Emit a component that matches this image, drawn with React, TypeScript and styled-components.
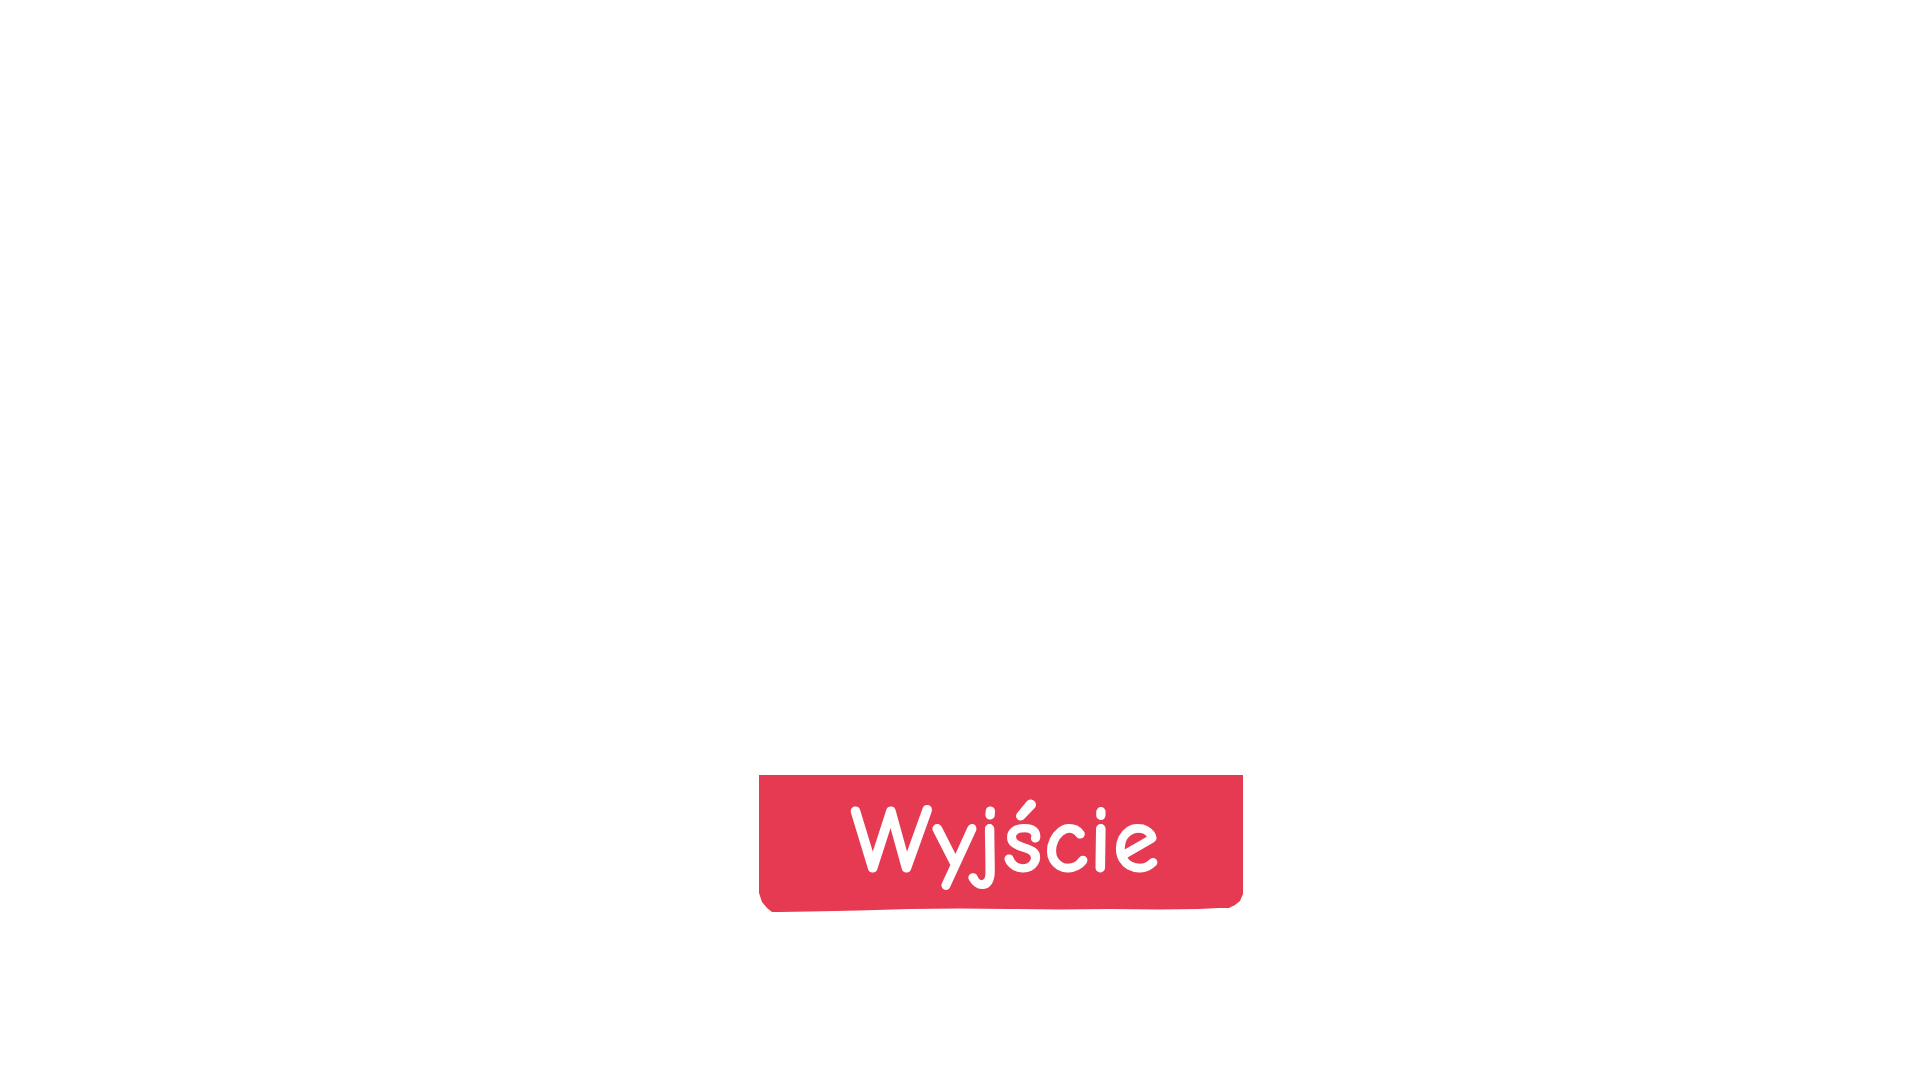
import React from "react";
import styled, { createGlobalStyle } from "styled-components";

const Global = createGlobalStyle`
  html, body { margin: 0; padding: 0; background: #ffffff; }
  #root { width: 1920px; height: 1080px; }
`;

const Screen = styled.main`
  width: 1920px;
  height: 1080px;
  display: flex;
  flex-direction: column;
  align-items: center;
  padding-top: 775px;
  box-sizing: border-box;
  background: #ffffff;
`;

const ExitButton = styled.button`
  margin-left: 82px;
  width: 484px;
  height: 137px;
  border: none;
  padding: 0 0 6px 8px;
  background: #e53a52;
  color: #ffffff;
  font-family: "Comic Sans MS", "Comic Neue", cursive;
  font-weight: 700;
  font-size: 97px;
  line-height: 1;
  cursor: pointer;
  display: flex;
  align-items: center;
  justify-content: center;
  clip-path: polygon(
    0 0, 484px 0, 484px 119px, 481px 126px, 476px 130px, 470px 133px,
    460px 133px, 440px 134px, 400px 134.5px, 350px 134px, 300px 134.5px,
    250px 134px, 200px 133.5px, 150px 134px, 100px 135.5px, 50px 136.5px,
    20px 137px, 13px 137px, 8px 133px, 3px 127px, 0 118px
  );
`;

export default function App() {
  return (
    <>
      <Global />
      <Screen>
        <ExitButton type="button">Wyjście</ExitButton>
      </Screen>
    </>
  );
}
